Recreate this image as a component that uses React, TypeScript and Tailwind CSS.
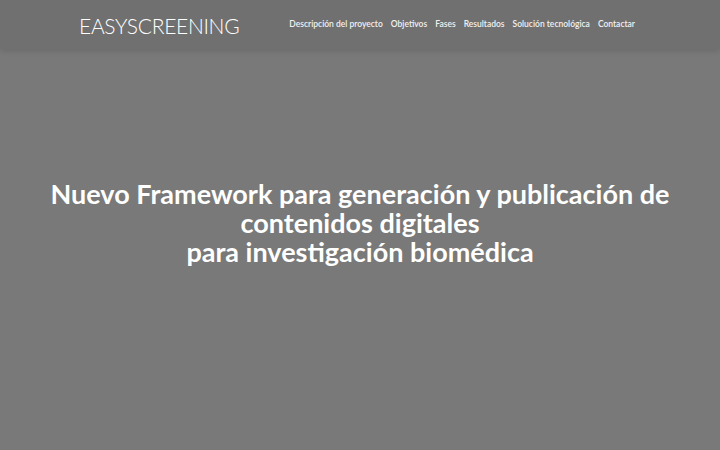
const links = [
  "Descripción del proyecto",
  "Objetivos",
  "Fases",
  "Resultados",
  "Solución tecnológica",
  "Contactar",
];

export default function App() {
  return (
    <div className="w-[720px] h-[450px] bg-[#787978] flex flex-col overflow-hidden">
      {/* cabecera */}
      <header className="h-[49px] bg-[#707070] shadow-[0_2px_6px_rgba(0,0,0,0.12)] flex items-center pl-[79px] pr-[85px] relative z-10">
        <div className="text-white text-[21px] font-light tracking-[-0.3px] leading-none font-['Lato',sans-serif] mt-[1px]">
          EASYSCREENING
        </div>
        <nav className="ml-auto flex gap-[8px] font-['Lato',sans-serif] text-[8.5px] font-semibold text-[#f0f0f0]">
          {links.map((l) => (
            <span key={l}>{l}</span>
          ))}
        </nav>
      </header>

      {/* portada */}
      <main className="flex-1 flex justify-center pt-[130px]">
        <h1 className="text-white text-center font-['Lato',sans-serif] font-bold text-[27px] leading-[29px]">
          Nuevo Framework para generación y publicación de
          <br />
          contenidos digitales
          <br />
          para investigación biomédica
        </h1>
      </main>
    </div>
  );
}
